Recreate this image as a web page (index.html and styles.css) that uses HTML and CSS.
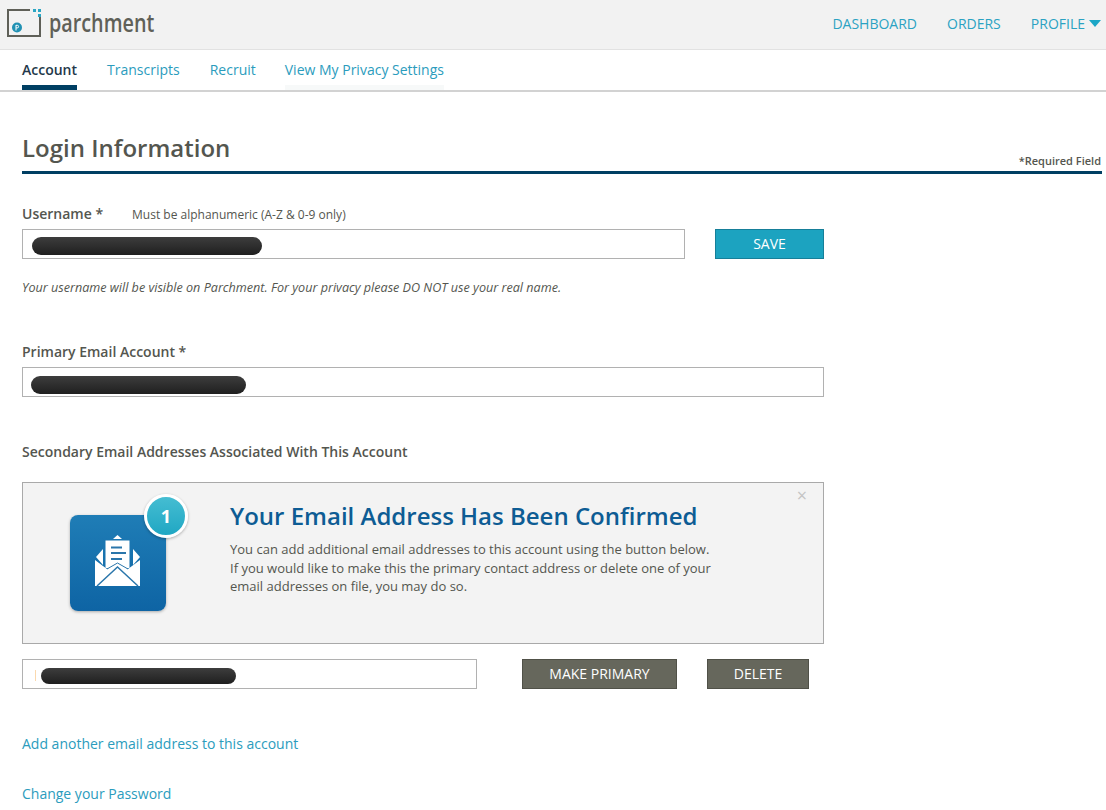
FILE: index.html
```html
<!DOCTYPE html>
<html>

<head>
    <title>Parchment - Account</title>
    <meta name="viewport" content="width=device-width, initial-scale=1.0">
    <link rel="stylesheet" href="styles.css">
</head>

<body>
    <header class="topbar">
        <div class="logo">
            <svg class="logo-mark" width="42" height="40" viewBox="0 0 42 40">
                <path d="M30 9H7V37H41V14H39V35H9V11H30Z" fill="#5f6058"/>
                <rect x="33" y="9" width="3" height="3" fill="#2ba6c4"/>
                <rect x="38" y="9" width="3" height="3" fill="#2ba6c4"/>
                <rect x="38" y="14" width="3" height="3" fill="#2ba6c4"/>
                <circle cx="17" cy="27.500" r="5" fill="#2191b3"/>
                <path d="M16 25V30.500M16 25.300H17.300A1.300 1.300 0 0 1 17.300 27.900H16" stroke="#fff" stroke-width="1" fill="none"/>
            </svg>
            <span class="logo-text">parchment</span>
        </div>
        <nav class="topnav">
            <a href="#">DASHBOARD</a>
            <a href="#">ORDERS</a>
            <a href="#" class="profile">PROFILE<span class="caret"></span></a>
        </nav>
    </header>

    <nav class="tabs">
        <a href="#" class="tab active">Account</a>
        <a href="#" class="tab">Transcripts</a>
        <a href="#" class="tab">Recruit</a>
        <a href="#" class="tab tab-faint">View My Privacy Settings</a>
    </nav>

    <main class="content">
        <div class="title-row">
            <h1>Login Information</h1>
            <span class="required">*Required Field</span>
        </div>

        <section class="form">
            <div class="label-row">
                <label>Username *</label>
                <span class="hint">Must be alphanumeric (A-Z &amp; 0-9 only)</span>
            </div>
            <div class="field-row">
                <div class="field username"><span class="redact redact-user"></span></div>
                <button class="btn btn-save">SAVE</button>
            </div>
            <p class="note">Your username will be visible on Parchment. For your privacy please DO NOT use your real name.</p>

            <label class="label-email">Primary Email Account *</label>
            <div class="field primary"><span class="redact redact-primary"></span></div>

            <label class="label-secondary">Secondary Email Addresses Associated With This Account</label>

            <div class="notice">
                <div class="notice-icon">
                    <svg class="envelope" width="46" height="52" viewBox="0 0 46 52">
                        <path d="M18 4L22.500 0L27 4Z" fill="#fff"/>
                        <path d="M1 22L8 14V30ZM45 22L38 14V30Z" fill="#fff"/>
                        <path d="M10.500 5.500H34.500V33H10.500Z" fill="#fff"/>
                        <path d="M16 12.500H27M16 18H31M16 24H27" stroke="#2a76ab" stroke-width="1.800" fill="none"/>
                        <path d="M0 25L12 34L22.500 28L33 34L45 25V51H0Z" fill="#fff"/>
                        <path d="M12 34L22.500 28L33 34" stroke="#2a76ab" stroke-width="1" fill="none"/>
                        <path d="M2 51L22.500 32L43 51" stroke="#2a76ab" stroke-width="1.500" fill="none"/>
                    </svg>
                    <span class="badge">1</span>
                </div>
                <div class="notice-body">
                    <h2>Your Email Address Has Been Confirmed</h2>
                    <p>You can add additional email addresses to this account using the button below.<br>If you would like to make this the primary contact address or delete one of your<br>email addresses on file, you may do so.</p>
                </div>
                <span class="close">&times;</span>
            </div>

            <div class="field-row secondary-row">
                <div class="field secondary"><span class="cursor"></span><span class="redact redact-secondary"></span></div>
                <button class="btn btn-dark btn-primary">MAKE PRIMARY</button>
                <button class="btn btn-dark btn-delete">DELETE</button>
            </div>

            <a href="#" class="link link-add">Add another email address to this account</a>
            <a href="#" class="link link-pass">Change your Password</a>
        </section>
    </main>
</body>

</html>
```

FILE: styles.css
```css
* { box-sizing: border-box; }
html, body { height: 100%; }
body { margin: 0; background: #fff; color: #54564f; font-family: "Open Sans", sans-serif; font-size: 14px; overflow: hidden; }
a { color: #2b9cbd; text-decoration: none; }

.topbar { display: flex; justify-content: space-between; align-items: center; height: 50px; background: #f2f2f2; border-bottom: 1px solid #e2e2e2; }
.logo { display: flex; align-items: flex-start; height: 49px; }
.logo-mark { display: block; flex: none; }
.logo-text { margin: 4px 0 0 7px; font-size: 26px; font-weight: 600; line-height: 36px; color: #5f6058; transform: scaleX(0.76); transform-origin: left; }
.topnav { display: flex; gap: 30px; padding-right: 5px; margin-top: -2px; }
.topnav a { font-size: 14px; line-height: 20px; color: #2ba2c2; }
.profile { display: flex; align-items: center; }
.caret { width: 0; height: 0; margin-left: 4px; border-left: 6.500px solid transparent; border-right: 6.500px solid transparent; border-top: 7px solid #1ba6c6; }

.tabs { display: flex; gap: 30px; height: 42px; padding-left: 22px; border-bottom: 2px solid #d2d2d2; }
.tab { height: 40px; padding-top: 10px; line-height: 20px; font-size: 14px; }
.tab.active { color: #24384a; font-weight: 600; border-bottom: 5px solid #003f63; }
.tab-faint { margin-left: -1px; border-bottom: 5px solid #f7f9f9; }

.content { padding: 0 4px 0 22px; }
.title-row { display: flex; justify-content: space-between; align-items: flex-end; height: 82px; border-bottom: 3px solid #003f63; }
h1 { margin: 0 0 5px; font-size: 24px; line-height: 36px; font-weight: 600; color: #54564f; }
.required { margin: 0 1px 2px 0; font-size: 11px; font-weight: 600; line-height: 16px; }

.form { width: 802px; }
label { display: block; font-size: 14px; font-weight: 600; line-height: 20px; }
.label-row { display: flex; align-items: center; margin-top: 30px; height: 20px; }
.hint { margin-left: 29px; font-size: 12px; }
.field-row { display: flex; margin-top: 5px; }
.field { display: flex; align-items: center; height: 30px; padding-left: 8px; background: #fff; border: 1px solid #b1b1b1; }
.username { width: 663px; padding: 4px 0 0 9px; }
.primary { padding-top: 6px; }
.redact { display: block; height: 18px; border-radius: 9px; background: linear-gradient(#3d3d3d, #1f1f1f); }
.redact-user { width: 230px; }
.redact-primary { width: 215px; }
.redact-secondary { width: 195px; height: 16px; }
.cursor { width: 1px; height: 11px; margin-right: 5px; background: #fbd9ae; }
.btn { height: 30px; border: 1px solid; padding: 0 0 2px; font-family: inherit; font-size: 14px; color: #fff; }
.btn-save { width: 109px; margin-left: 30px; background: #1ca3c0; border-color: #167f99; }
.note { margin: 19px 0 0; font-size: 12.600px; font-style: italic; line-height: 20px; }
.label-email { margin-top: 44px; }
.label-email + .field { margin-top: 5px; }
.label-secondary { margin-top: 45px; }

.notice { position: relative; display: flex; height: 162px; margin-top: 20px; background: #f3f3f3; border: 1px solid #a9a9a9; }
.notice-icon { position: relative; display: flex; justify-content: center; align-items: center; width: 96px; height: 96px; margin: 32px 0 0 47px; border-radius: 8px; background: linear-gradient(#1f7db6, #0e64a4); box-shadow: 0 1px 3px rgba(0, 0, 0, 0.3); }
.envelope { margin-top: -4px; }
.badge { position: absolute; top: -21px; right: -22px; width: 44px; height: 44px; border: 3px solid #fff; border-radius: 50%; background: linear-gradient(#45bdd2, #20a7c3); box-shadow: 0 1px 3px rgba(0, 0, 0, 0.3); color: #fff; font-size: 18px; font-weight: 700; line-height: 38px; text-align: center; }
.notice-body { margin: 16px 0 0 64px; }
h2 { margin: 0; font-size: 24px; font-weight: 600; line-height: 34px; color: #0d5c94; }
.notice-body p { margin: 7px 0 0; font-size: 13px; line-height: 18.500px; }
.close { position: absolute; top: 2px; right: 16px; font-size: 18px; line-height: 20px; color: #c4c4c4; }

.secondary-row { margin-top: 15px; }
.secondary { width: 455px; padding: 3px 0 0 12px; }
.btn-dark { background: #66675c; border-color: #505148; }
.btn-primary { width: 155px; margin-left: 45px; }
.btn-delete { width: 102px; margin-left: 30px; }

.link { display: block; font-size: 14px; line-height: 20px; }
.link-add { margin-top: 45px; }
.link-pass { margin-top: 30px; }
```
